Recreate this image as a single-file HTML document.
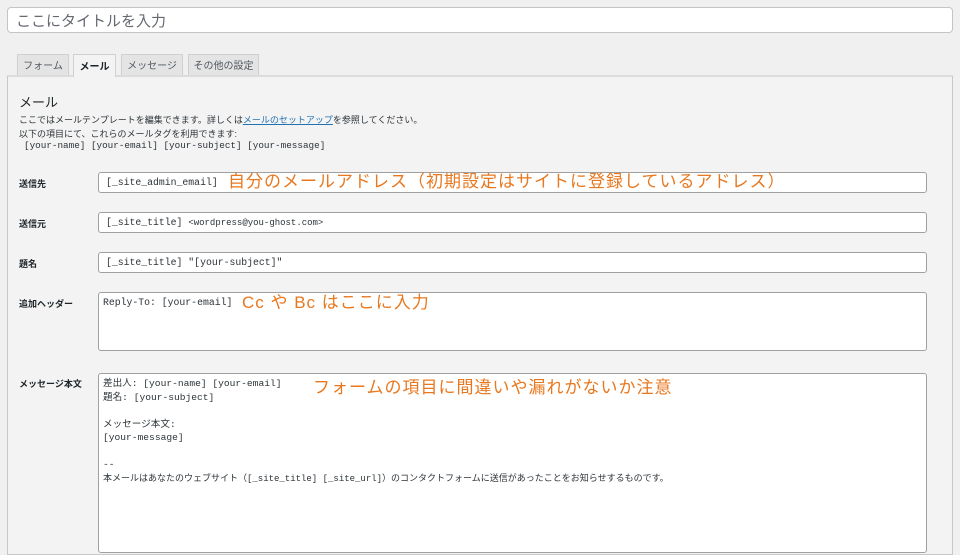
<!DOCTYPE html>
<html><head><meta charset="utf-8"><style>
*{box-sizing:border-box;margin:0;padding:0}
body{width:960px;height:540px;overflow:hidden;background:#f0f0f1;font-family:"Liberation Sans","Noto Sans CJK JP",sans-serif;color:#1d2327;position:relative}
.abs{position:absolute}
.title{left:7px;top:7px;width:946px;height:26px;background:#fff;border:1px solid #c3c4c7;border-radius:4px;font-size:15px;color:#646970;padding:0 8px;display:flex;align-items:center}
.tab{top:54px;height:22px;background:#e4e4e4;border:1px solid #d0d0d0;border-bottom:none;font-size:10px;color:#50575e;display:flex;align-items:center;justify-content:center;padding-bottom:2px}
.tab.act{background:#f3f3f3;color:#1d2327;font-weight:bold;height:23px;z-index:2}
.panel{left:7px;top:75px;width:946px;height:480px;background:#f3f3f3;border:1px solid #c8c8c8;border-top:2px solid #dcdcdc}
.lbl{left:19px;font-size:9px;font-weight:bold;color:#1d2327}
.in{left:98px;width:829px;background:#fff;border:1px solid #a0a0a0;border-radius:3px;font-family:"Liberation Mono","Noto Sans CJK JP",monospace;font-size:9.8px;color:#2c3338;padding:0 7px;display:flex;align-items:center}
.ta{display:block;padding:2px 4px;line-height:13.5px}
.note{color:#e8781f;font-size:17px;letter-spacing:1px;line-height:20px}
.sm{font-size:9px;color:#2c3338;left:19px}
</style></head><body>
<div class="abs title">ここにタイトルを入力</div>
<div class="abs tab" style="left:17px;width:52px">フォーム</div>
<div class="abs tab act" style="left:73px;width:43px">メール</div>
<div class="abs tab" style="left:121px;width:62px">メッセージ</div>
<div class="abs tab" style="left:188px;width:71px">その他の設定</div>
<div class="abs panel"></div>
<div class="abs" style="left:19px;top:92px;font-size:13px">メール</div>
<div class="abs sm" style="top:113px">ここではメールテンプレートを編集できます。詳しくは<span style="color:#2271b1;text-decoration:underline">メールのセットアップ</span>を参照してください。</div>
<div class="abs sm" style="top:127px">以下の項目にて、これらのメールタグを利用できます:</div>
<div class="abs sm" style="top:140px;left:24px;font-family:'Liberation Mono',monospace;font-size:9.3px">[your-name] [your-email] [your-subject] [your-message]</div>

<div class="abs lbl" style="top:177px">送信先</div>
<div class="abs in" style="top:172px;height:21px">[_site_admin_email]</div>
<div class="abs note" style="left:228px;top:172px">自分のメールアドレス（初期設定はサイトに登録しているアドレス）</div>

<div class="abs lbl" style="top:217px">送信元</div>
<div class="abs in" style="top:212px;height:21px">[_site_title]&nbsp;<span style="font-size:9px">&lt;wordpress@you-ghost.com&gt;</span></div>

<div class="abs lbl" style="top:257px">題名</div>
<div class="abs in" style="top:252px;height:21px">[_site_title] "[your-subject]"</div>

<div class="abs lbl" style="top:297px">追加ヘッダー</div>
<div class="abs in ta" style="top:292px;height:59px;padding-top:3px">Reply-To: [your-email]</div>
<div class="abs note" style="left:242px;top:293px">Cc や Bc はここに入力</div>

<div class="abs lbl" style="top:377px">メッセージ本文</div>
<div class="abs in ta" style="top:373px;height:180px;font-size:9.6px;padding-top:3px">差出人: [your-name] [your-email]<br>題名: [your-subject]<br><br>メッセージ本文:<br>[your-message]<br><br>--<br><span style="font-size:9px">本メールはあなたのウェブサイト（[_site_title] [_site_url]）のコンタクトフォームに送信があったことをお知らせするものです。</span></div>
<div class="abs note" style="left:313px;top:378px">フォームの項目に間違いや漏れがないか注意</div>
</body></html>
